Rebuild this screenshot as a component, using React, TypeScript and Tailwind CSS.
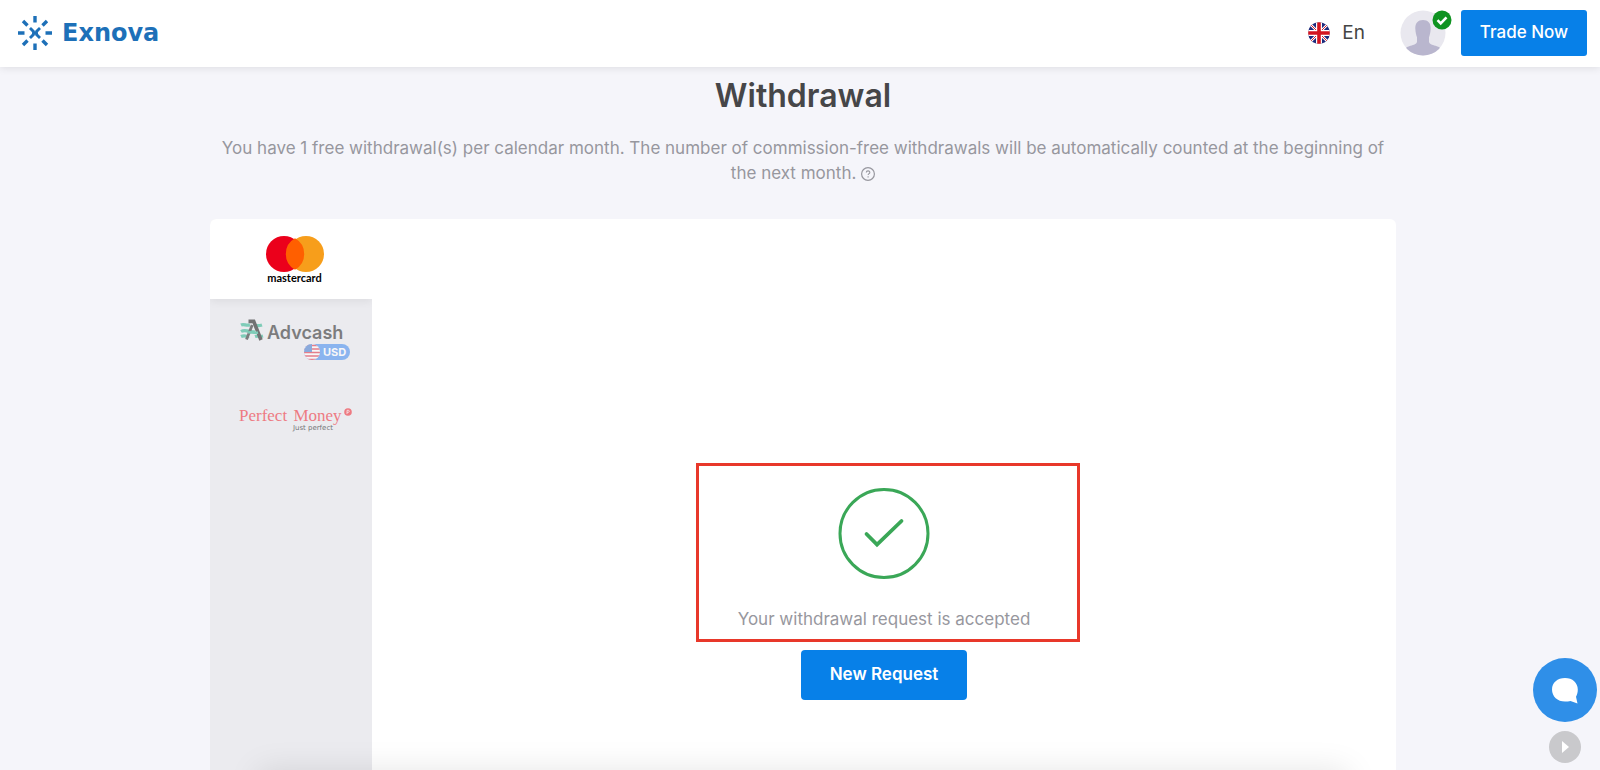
import React from "react";

const BrandMark = () => (
  <svg viewBox="0 0 36 36" className="size-9" fill="none" stroke="#1d70b8" strokeWidth="3.400" aria-hidden="true">
    <path d="M18 1v6.500M18 28.500V35M1 18h6.500M28.500 18H35M6 6l4.500 4.500M25.500 25.500L30 30M30 6l-4.500 4.500M10.500 25.500L6 30" />
    <path strokeWidth="2.800" d="M13 13l3.400 3.400v3.200L13 23M23 13l-3.400 3.400v3.200L23 23M16.400 18h3.200" />
  </svg>
);

const UkFlag = () => (
  <svg viewBox="0 0 22 22" className="size-[22px]" aria-hidden="true">
    <defs>
      <clipPath id="uk">
        <circle cx="11" cy="11" r="10.800" />
      </clipPath>
    </defs>
    <g clipPath="url(#uk)">
      <rect width="22" height="22" fill="#1d2a7c" />
      <path d="M0 0l22 22M22 0L0 22" stroke="#fff" strokeWidth="2.600" />
      <path d="M0 0l22 22M22 0L0 22" stroke="#d3222f" strokeWidth="1" />
      <path d="M11 0v22M0 11h22" stroke="#fff" strokeWidth="6" />
      <path d="M11 0v22M0 11h22" stroke="#d3141f" strokeWidth="3.600" />
    </g>
  </svg>
);

const Avatar = () => (
  <svg viewBox="0 0 46 46" className="size-[46px]" aria-hidden="true">
    <defs>
      <clipPath id="avatar">
        <circle cx="23" cy="23" r="22.500" />
      </clipPath>
    </defs>
    <circle cx="23" cy="23" r="22.500" fill="#e9e8ef" />
    <g clipPath="url(#avatar)" fill="#b9b6ce">
      <path d="M23 10c5.200 0 7.900 3.400 7.700 8.600-.2 4.200-1 7-1.700 8.600v4.600c.3 2.300 3 3.200 6.500 4 2.800.8 4.500 1.700 5.500 3.400V48H5v-8.800c1-1.700 2.700-2.600 5.500-3.400 3.500-.8 6.200-1.700 6.500-4v-4.600c-.7-1.600-1.500-4.400-1.700-8.600C15.100 13.400 17.800 10 23 10z" />
    </g>
  </svg>
);

const MastercardLogo = () => (
  <span className="flex flex-col items-center">
    <svg viewBox="0 0 58 36" className="h-9 w-[58px]" aria-hidden="true">
      <circle cx="18" cy="18" r="18" fill="#eb001b" />
      <circle cx="40" cy="18" r="18" fill="#f79e1b" />
      <path d="M29 2.300a18 18 0 0 1 0 31.400a18 18 0 0 1 0-31.400z" fill="#ff5f00" />
    </svg>
    <span className="font-['Lato',sans-serif] text-[11px] leading-3 font-bold text-black">mastercard</span>
  </span>
);

const AdvcashLogo = () => (
  <span className="flex w-[110px] flex-col opacity-60">
    <span className="flex items-end gap-[3px]">
      <svg viewBox="0 0 24 22" className="mb-1 h-[22px] w-6" fill="none" aria-hidden="true">
        <path d="M1 6c3-1.500 5 1 9 0M1 12.500c5-3 9 1.500 14 0M1 17.500c4-2 6 .5 8 0M16 6.500c2 .3 4 .2 6-.5M15 17.500c3-1 5 .3 8-.5" stroke="#38b894" strokeWidth="3.200" />
        <path d="M8.500 2.400h5.200L21 21" stroke="#222" strokeWidth="3.600" />
        <path d="M12.200 6L6.500 20.500" stroke="#333" strokeWidth="2.800" />
        <path d="M8 13.500c3-1 6 1 10 0" stroke="#38b894" strokeWidth="2.400" />
      </svg>
      <span className="font-['Inter',sans-serif] text-[18px] leading-6 font-semibold text-[#333]">Advcash</span>
    </span>
    <span className="-mt-px flex h-4 w-[46px] items-center gap-[3px] self-end rounded-full bg-[#4b91f0]">
      <svg viewBox="0 0 16 16" className="size-4" aria-hidden="true">
        <defs>
          <clipPath id="us">
            <circle cx="8" cy="8" r="8" />
          </clipPath>
        </defs>
        <g clipPath="url(#us)">
          <rect width="16" height="16" fill="#fff" />
          <path d="M0 1.500h16M0 5h16M0 8.500h16M0 12h16M0 15.500h16" stroke="#e0364a" strokeWidth="1.600" />
          <rect width="8" height="8" fill="#4b7fd0" />
        </g>
      </svg>
      <span className="font-['Inter',sans-serif] text-[11px] leading-4 font-bold text-white">USD</span>
    </span>
  </span>
);

const PerfectMoneyLogo = () => (
  <span className="flex w-[113px] flex-col opacity-60">
    <span className="flex items-start justify-between text-[#f0303a]">
      <span className="font-['Liberation_Serif',serif] text-[17px] leading-4 whitespace-nowrap">
        <span className="mr-[2px]">Perfect</span> Money
      </span>
      <svg viewBox="0 0 8 8" className="size-2" aria-hidden="true">
        <circle cx="4" cy="4" r="3.800" fill="#f0303a" />
        <path d="M3 6V2.300h1.300a1 1 0 0 1 0 2H3" stroke="#fff" strokeWidth=".7" fill="none" />
      </svg>
    </span>
    <span className="self-end pr-[19px] font-['DejaVu_Sans',sans-serif] text-[7px] leading-2 whitespace-nowrap text-[#222]">Just perfect</span>
  </span>
);

export default function App() {
  return (
    <div className="relative flex min-h-screen flex-col overflow-hidden bg-[#f5f5fa] font-['Inter',sans-serif]">
      <header className="relative flex h-[67px] items-center justify-between bg-white pr-[13px] pb-[2px] pl-[17px] shadow-[0_1px_8px_rgba(0,0,0,0.1)]">
        <a href="#home" className="flex items-center gap-[9px]">
          <BrandMark />
          <span className="font-['DejaVu_Sans',sans-serif] text-[24px] leading-8 font-bold text-[#1d70b8]">Exnova</span>
        </a>
        <div className="flex items-center">
          <button type="button" className="mr-[35px] flex items-center gap-3 text-[19px] leading-6 text-[#444]">
            <UkFlag />
            En
          </button>
          <button type="button" aria-label="Account" className="relative mr-[15px]">
            <Avatar />
            <svg viewBox="0 0 20 20" className="absolute top-0 -right-[6px] size-5" fill="none" aria-hidden="true">
              <circle cx="10" cy="10" r="9.500" fill="#0f9321" />
              <path d="M5.500 10.200l3.200 3.200 5.800-6" stroke="#fff" strokeWidth="2.600" />
            </svg>
          </button>
          <button type="button" className="h-[46px] w-[126px] rounded-[3px] bg-[#0780e8] pt-px text-[17px] font-medium text-white">
            Trade Now
          </button>
        </div>
      </header>

      <main className="flex grow flex-col items-center pl-[6px]">
        <h1 className="mt-[9px] text-[32px] leading-10 font-semibold text-[#464648]">Withdrawal</h1>
        <p className="mt-5 w-full max-w-[1186px] text-center text-[17px] leading-[25px] text-[#97979e]">
          You have 1 free withdrawal(s) per calendar month. The number of commission-free withdrawals will be automatically counted at the beginning of the next month.{" "}
          <svg viewBox="0 0 14 14" className="inline size-[14px]" fill="none" stroke="#97979e" aria-hidden="true">
            <circle cx="7" cy="7" r="6.400" strokeWidth="1.200" />
            <path d="M5.300 5.600c0-2.300 3.500-2.200 3.500-.2 0 1.300-1.700 1.300-1.700 2.700M7.100 9.300v1.200" strokeWidth="1.100" />
          </svg>
        </p>

        <section className="relative mt-[33px] flex w-full max-w-[1186px] grow rounded-t-md bg-white">
          <nav className="flex w-[162px] shrink-0 flex-col overflow-hidden rounded-tl-md bg-[#ebebef]">
            <button type="button" aria-label="Mastercard" className="flex h-20 justify-center bg-white pt-[17px] pl-[7px] shadow-[0_3px_8px_rgba(0,0,0,0.06)]">
              <MastercardLogo />
            </button>
            <button type="button" className="flex h-[86px] pt-5 pl-[30px]">
              <AdvcashLogo />
            </button>
            <button type="button" className="flex h-20 pt-[23px] pl-[29px]">
              <PerfectMoneyLogo />
            </button>
          </nav>

          <div className="flex grow flex-col items-center pt-[269px]">
            <div role="status" className="relative flex flex-col items-center">
              <svg viewBox="0 0 92 92" className="size-[92px]" fill="none" stroke="#3aa757" strokeWidth="3" aria-hidden="true">
                <circle cx="46" cy="45.500" r="44" />
                <path d="M28.500 46l10.500 10.500L63.500 33" strokeWidth="3.800" strokeLinecap="round" />
              </svg>
              <p className="mt-[27px] text-[17px] leading-6 text-[#97979e]">Your withdrawal request is accepted</p>
              <div className="absolute -top-[25px] left-1/2 -ml-[188px] h-[179px] w-[384px] border-[3px] border-[#e8382a]" />
            </div>
            <button type="button" className="mt-[19px] h-[50px] w-[166px] rounded-[4px] bg-[#0780e8] text-[17px] font-semibold text-white">
              New Request
            </button>
          </div>

          <div className="absolute inset-x-12 top-full h-10 shadow-[0_0_32px_rgba(0,0,0,0.1)]" />
        </section>
      </main>

      <div className="absolute right-[3px] bottom-[7px] flex flex-col items-center gap-[9px]">
        <button type="button" aria-label="Open chat" className="flex size-16 items-center justify-center rounded-full bg-[#2f8fe8]">
          <svg viewBox="0 0 28 28" className="size-7" fill="#fff" aria-hidden="true">
            <path d="M14 2c7.500 0 12.800 4.800 12.800 11.500 0 3-.7 5.400-1.800 7.200L26.500 27.500l-7-2.500c-1.800.400-3.500.600-5.500.600C6.500 25.600 1 20.500 1 13.500S6.500 2 14 2z" />
          </svg>
        </button>
        <button type="button" aria-label="Expand" className="flex size-8 items-center justify-center rounded-full bg-[#c9c9cc]">
          <svg viewBox="0 0 12 14" className="h-[14px] w-3" fill="#fff" aria-hidden="true">
            <path d="M3 1l7 6-7 6z" />
          </svg>
        </button>
      </div>
    </div>
  );
}
